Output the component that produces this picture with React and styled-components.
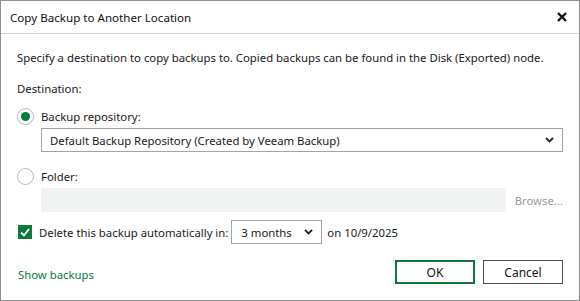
import React from "react";
import styled, { createGlobalStyle } from "styled-components";

const GREEN = "#0b7a3b";

const Global = createGlobalStyle`
  html, body { margin: 0; padding: 0; background: #fff; }
  body { font-family: "Noto Sans", "Open Sans", sans-serif; font-size: 11.35px; color: #1a1a1a; }
  * { box-sizing: border-box; }
`;

const Window = styled.div`
  width: 580px;
  height: 301px;
  border: 1px solid #8e8e8e;
  background: #fff;
  display: flex;
  flex-direction: column;
`;

const TitleBar = styled.div`
  height: 33px;
  border-bottom: 1px solid #cfcfcf;
  display: flex;
  align-items: center;
  justify-content: space-between;
  padding: 0 11px 0 9px;
  font-size: 11.6px;
  color: #111;
`;

const CloseBtn = styled.button`
  border: 0;
  background: transparent;
  padding: 0;
  width: 12px;
  height: 12px;
  display: flex;
  align-items: center;
  justify-content: center;
  cursor: pointer;
`;

const Body = styled.div`
  flex: 1;
  display: flex;
  flex-direction: column;
  padding: 16px 16px 0 16px;
`;

const Line = styled.div`
  height: 16px;
  line-height: 16px;
  margin-top: ${(p) => p.$mt || 0}px;
  white-space: nowrap;
`;

const RadioRow = styled.label`
  display: flex;
  align-items: center;
  gap: 7px;
  height: 16px;
  margin-top: ${(p) => p.$mt || 0}px;
`;

const Radio = styled.span`
  width: 17px;
  height: 17px;
  border-radius: 50%;
  border: 1px solid #b8b8b8;
  background: #fff;
  display: flex;
  align-items: center;
  justify-content: center;
  &::after {
    content: "";
    width: 9px;
    height: 9px;
    border-radius: 50%;
    background: ${(p) => (p.$checked ? GREEN : "transparent")};
  }
`;

const Indented = styled.div`
  margin-left: ${(p) => p.$ml ?? 24}px;
  margin-top: ${(p) => p.$mt || 0}px;
  display: flex;
  align-items: center;
  gap: 9px;
`;

const Select = styled.div`
  width: ${(p) => p.$w}px;
  height: 24px;
  border: 1px solid #a3a3a3;
  display: flex;
  align-items: center;
  justify-content: space-between;
  padding: 0 8px 0 ${(p) => p.$pl || 8}px;
  background: #fff;
`;

const Chevron = () => (
  <svg width="9" height="6" viewBox="0 0 9 6">
    <path d="M1 1 L4.5 4.5 L8 1" fill="none" stroke="#222" strokeWidth="1.8" />
  </svg>
);

const TextInput = styled.div`
  width: 467px;
  height: 24px;
  background: #f1f2f2;
`;

const BrowseText = styled.span`
  color: #9a9a9a;
`;

const CheckRow = styled.div`
  display: flex;
  align-items: center;
  height: 24px;
  margin-top: ${(p) => p.$mt || 0}px;
`;

const Checkbox = styled.span`
  width: 14px;
  height: 14px;
  background: ${GREEN};
  display: flex;
  align-items: center;
  justify-content: center;
  margin-left: 1px;
  margin-right: 7px;
`;

const DateText = styled.span`
  margin-left: 5px;
`;

const Footer = styled.div`
  display: flex;
  align-items: center;
  margin-top: 16px;
  height: 24px;
`;

const Link = styled.a`
  color: ${GREEN};
  text-decoration: none;
  margin-left: 1px;
  margin-top: 5px;
  cursor: pointer;
`;

const Spacer = styled.div`
  flex: 1;
`;

const Button = styled.button`
  width: 80px;
  height: 24px;
  margin-left: ${(p) => p.$ml || 0}px;
  background: #fff;
  font: inherit;
  font-size: 12px;
  color: #111;
  border: ${(p) => (p.$primary ? `2px solid ${GREEN}` : "1px solid #4d4d4d")};
  padding: 0;
  cursor: pointer;
`;

export default function App() {
  return (
    <>
      <Global />
      <Window>
        <TitleBar>
          <span>Copy Backup to Another Location</span>
          <CloseBtn aria-label="Close">
            <svg width="10" height="10" viewBox="0 0 10 10">
              <path d="M1 1 L9 9 M9 1 L1 9" stroke="#111" strokeWidth="2.4" />
            </svg>
          </CloseBtn>
        </TitleBar>
        <Body>
          <Line>
            Specify a destination to copy backups to. Copied backups can be found in the Disk (Exported) node.
          </Line>
          <Line $mt={15}>Destination:</Line>
          <RadioRow $mt={11}>
            <Radio $checked />
            <span>Backup repository:</span>
          </RadioRow>
          <Indented $mt={4}>
            <Select $w={522}>
              <span>Default Backup Repository (Created by Veeam Backup)</span>
              <Chevron />
            </Select>
          </Indented>
          <RadioRow $mt={16}>
            <Radio />
            <span>Folder:</span>
          </RadioRow>
          <Indented $mt={4}>
            <TextInput />
            <BrowseText>Browse...</BrowseText>
          </Indented>
          <CheckRow $mt={8}>
            <Checkbox>
              <svg width="10" height="9" viewBox="0 0 10 9">
                <path d="M1 4.5 L4 7.5 L9 1" fill="none" stroke="#fff" strokeWidth="1.8" />
              </svg>
            </Checkbox>
            <span>Delete this backup automatically in:</span>
            <Indented $ml={3}>
              <Select $w={91} $pl={9}>
                <span>3 months</span>
                <Chevron />
              </Select>
            </Indented>
            <DateText>on 10/9/2025</DateText>
          </CheckRow>
          <Footer>
            <Link>Show backups</Link>
            <Spacer />
            <Button $primary>OK</Button>
            <Button $ml={8}>Cancel</Button>
          </Footer>
        </Body>
      </Window>
    </>
  );
}
